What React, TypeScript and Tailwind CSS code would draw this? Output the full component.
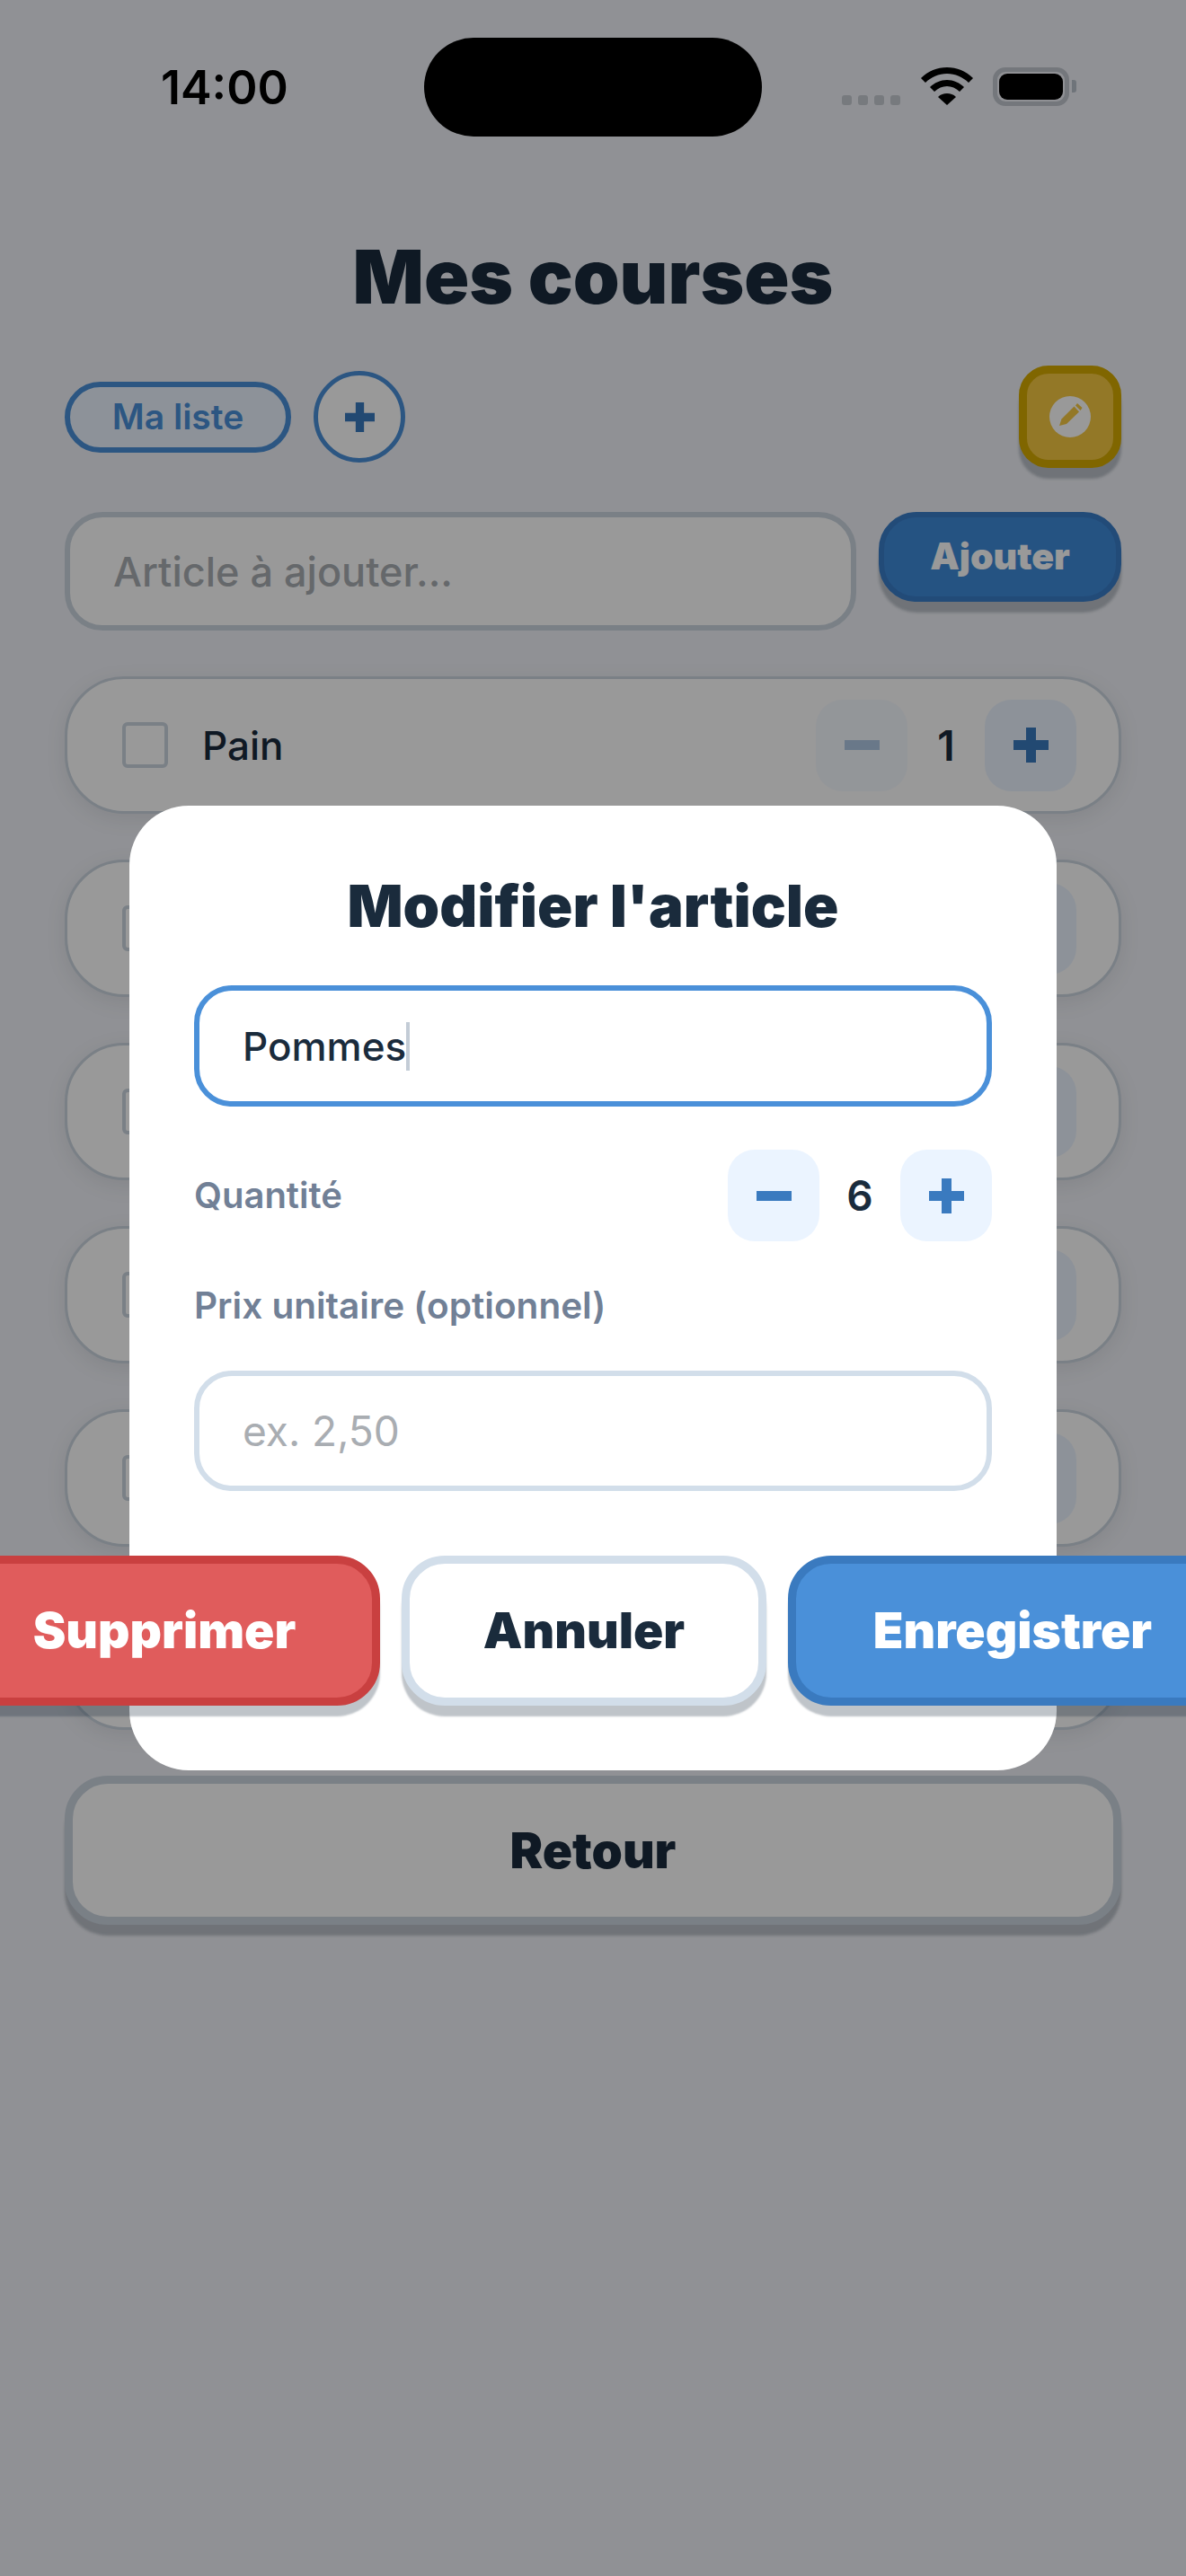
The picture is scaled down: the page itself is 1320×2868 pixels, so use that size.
// only "Pain" shows, the other rows sit behind the modal
const rows = ["Pain", "", "", "", "", ""];

function PlusIcon({ className }: { className: string }) {
  return (
    <svg viewBox="0 0 39 39" className={className} fill="currentColor">
      <path d="M14 0h11v14h14v11H25v14H14V25H0V14h14z" />
    </svg>
  );
}

function MinusIcon({ className }: { className: string }) {
  return (
    <svg viewBox="0 0 39 39" className={className} fill="currentColor">
      <rect x="0" y="14" width="39" height="11" />
    </svg>
  );
}

function PencilBadge() {
  return (
    <svg viewBox="0 0 46 46" className="h-[46px] w-[46px]">
      <circle cx="23" cy="23" r="23" fill="#ffffff" />
      <path d="M11 33l2.5-7.5L27.5 11.5 33 17.5 19 31z" fill="#f5c842" />
      <path d="M29 10.5L31 8l5.5 5-2 3z" fill="#f5c842" />
    </svg>
  );
}

function StatusBar() {
  return (
    <div className="absolute left-0 right-0 top-0 z-20 h-[160px]">
      <span className="absolute left-[179px] top-[66px] text-[52px] font-semibold leading-[64px] text-black">14:00</span>
      <div className="absolute left-[472px] top-[42px] h-[110px] w-[376px] rounded-[55px] bg-black" />
      <div className="absolute left-[937px] top-[106px] flex gap-[7px]">
        <div className="h-[11px] w-[11px] rounded-[3px] bg-[#777a7e]" />
        <div className="h-[11px] w-[11px] rounded-[3px] bg-[#777a7e]" />
        <div className="h-[11px] w-[11px] rounded-[3px] bg-[#777a7e]" />
        <div className="h-[11px] w-[11px] rounded-[3px] bg-[#777a7e]" />
      </div>
      <svg viewBox="0 0 58 42" className="absolute left-[1025px] top-[75px] h-[42px] w-[58px]" fill="black">
        <path d="M29 0C18 0 8 4 0 12l5 5c6-6 15-10 24-10s18 4 24 10l5-5C50 4 40 0 29 0z" />
        <path d="M29 14c-7 0-14 3-19 8l5 5c4-4 9-6 14-6s10 2 14 6l5-5c-5-5-12-8-19-8z" />
        <path d="M29 29c-4 0-7 1-10 4l10 9 10-9c-3-3-6-4-10-4z" />
      </svg>
      <div className="absolute left-[1105px] top-[75px] flex h-[43px] w-[85px] items-center justify-center rounded-[14px] border-[5px] border-[#74777c]">
        <div className="h-[29px] w-[71px] rounded-[9px] bg-black" />
      </div>
      <div className="absolute left-[1193px] top-[89px] h-[14px] w-[5px] rounded-r-[3px] bg-[#6f747a]" />
    </div>
  );
}

function ListRow({ name, first }: { name: string; first: boolean }) {
  return (
    <div className="flex h-[153px] items-center rounded-[66px] border-[3px] border-[#cbd5e0] bg-white pl-[61px] pr-[47px] shadow-[0_6px_24px_rgba(0,0,0,0.08)]">
      <div className="h-[51px] w-[51px] rounded-[6px] border-[4px] border-[#cbd5e0]" />
      <span className="ml-[38px] flex-1 text-[44px] font-medium leading-none text-[#1a2b3c]">{name}</span>
      <div className="flex items-center">
        <div className={`flex h-[102px] w-[102px] items-center justify-center rounded-[30px] bg-[#ebf4ff] ${first ? "opacity-40" : ""}`}>
          <MinusIcon className="h-[39px] w-[39px] text-[#3a7abf]" />
        </div>
        <span className="w-[86px] text-center text-[46px] font-semibold leading-none text-[#1a2b3c]">{first ? "1" : ""}</span>
        <div className="flex h-[102px] w-[102px] items-center justify-center rounded-[30px] bg-[#ebf4ff]">
          <PlusIcon className="h-[39px] w-[39px] text-[#3a7abf]" />
        </div>
      </div>
    </div>
  );
}

function EditModal() {
  return (
    <div className="absolute inset-x-[144px] top-[897px] z-10 h-[1074px] rounded-[66px] bg-white p-[72px]">
      <h2 className="mb-[48px] text-center text-[65px] font-black leading-[80px] text-[#1a2b3c]">Modifier l'article</h2>
      <div className="flex h-[135px] items-center rounded-[42px] border-[6px] border-[#4a90d9] px-[48px] text-[44px] font-medium text-[#1a2b3c]">
        Pommes
        <span className="h-[54px] w-[4px] bg-[#c3ccd6]" />
      </div>
      <div className="mt-[48px] flex h-[102px] items-center justify-between">
        <span className="text-[40px] font-semibold text-[#718096]">Quantité</span>
        <div className="flex items-center">
          <div className="flex h-[102px] w-[102px] items-center justify-center rounded-[30px] bg-[#ebf4ff]">
            <MinusIcon className="h-[39px] w-[39px] text-[#3a7abf]" />
          </div>
          <span className="w-[90px] text-center text-[46px] font-semibold leading-none text-[#1a2b3c]">6</span>
          <div className="flex h-[102px] w-[102px] items-center justify-center rounded-[30px] bg-[#ebf4ff]">
            <PlusIcon className="h-[39px] w-[39px] text-[#3a7abf]" />
          </div>
        </div>
      </div>
      <div className="mt-[48px] text-[40.5px] font-semibold leading-[48px] text-[#718096]">Prix unitaire (optionnel)</div>
      <input
        readOnly
        placeholder="ex. 2,50"
        className="mt-[48px] block h-[134px] w-full rounded-[42px] border-[6px] border-[#d2deea] bg-white px-[48px] text-[46px] outline-none placeholder:text-[#a9adb2]"
      />
      <div className="mt-[72px] flex justify-center gap-[24px]">
        <button className="h-[167px] w-[480px] shrink-0 rounded-[48px] border-[9px] border-[#c94040] bg-[#e05c5c] text-[55px] font-black text-white shadow-[0_12px_2px_rgba(26,43,60,0.28)]">Supprimer</button>
        <button className="h-[167px] w-[406px] shrink-0 rounded-[48px] border-[9px] border-[#d2deea] bg-white text-[55px] font-black text-[#1a2b3c] shadow-[0_12px_2px_rgba(26,43,60,0.28)]">Annuler</button>
        <button className="h-[167px] w-[500px] shrink-0 rounded-[48px] border-[9px] border-[#3a7abf] bg-[#4a90d9] text-[55px] font-black text-white shadow-[0_12px_2px_rgba(26,43,60,0.28)]">Enregistrer</button>
      </div>
    </div>
  );
}

export default function App() {
  return (
    <div className="relative h-[2868px] w-[1320px] overflow-hidden bg-[#f0f2f8] font-['Inter',sans-serif]">
      <main className="px-[72px] pt-[258px]">
        <h1 className="text-center text-[83px] font-black leading-[100px] text-[#1a2b3c]">Mes courses</h1>

        <div className="mt-[49px] flex h-[114px] items-center">
          <div className="flex h-[79px] w-[252px] items-center justify-center rounded-full border-[6px] border-[#4a90d9] bg-[#ebf4ff] text-[39px] font-semibold text-[#4a90d9]">Ma liste</div>
          <div className="ml-[25px] flex h-[102px] w-[102px] items-center justify-center rounded-full border-[5px] border-[#4a90d9] bg-white">
            <PlusIcon className="h-[33px] w-[33px] text-[#3a7abf]" />
          </div>
          <div className="ml-auto flex h-[114px] w-[114px] items-center justify-center rounded-[33px] border-[9px] border-[#d5aa00] bg-[#f5c842] shadow-[0_12px_3px_rgba(26,43,60,0.25)]">
            <PencilBadge />
          </div>
        </div>

        <div className="mt-[49px] flex items-start gap-[25px]">
          <input
            readOnly
            placeholder="Article à ajouter..."
            className="h-[132px] min-w-0 flex-1 rounded-[42px] border-[6px] border-[#cbd5e0] bg-white px-[48px] text-[45px] font-medium outline-none placeholder:text-[#a9adb2]"
          />
          <button className="h-[100px] w-[270px] rounded-[42px] border-[6px] border-[#3a7dc8] bg-[#3f8ad9] text-[41px] font-black text-white shadow-[0_12px_3px_rgba(26,43,60,0.25)]">Ajouter</button>
        </div>

        <div className="mt-[51px] flex flex-col gap-[51px]">
          {rows.map((name, i) => (
            <ListRow key={i} name={name} first={i === 0} />
          ))}
          <button className="h-[166px] rounded-[48px] border-[9px] border-[#cbd5e0] bg-white text-[55px] font-black text-[#1a2b3c] shadow-[0_12px_3px_rgba(26,43,60,0.25)]">Retour</button>
        </div>
      </main>

      <div className="absolute inset-0 bg-black/40" />
      <StatusBar />
      <EditModal />
    </div>
  );
}
